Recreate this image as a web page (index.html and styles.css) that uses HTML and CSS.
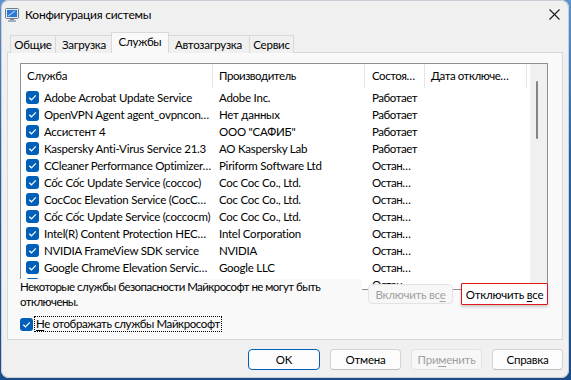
FILE: index.html
```html
<!DOCTYPE html>
<html lang="ru">
<head>
<meta charset="utf-8">
<link rel="stylesheet" href="styles.css">
</head>
<body>
<div class="window">
  <div class="titlebar">
    <svg class="app-icon" width="14" height="14" viewBox="0 0 14 14">
      <rect x="0.5" y="0.5" width="13" height="10" rx="1" fill="#e6ebf1" stroke="#6d7c8d"/>
      <rect x="2" y="2" width="10" height="7" fill="#2b78d4"/>
      <path d="M3 8 L10 3" stroke="#9cc8f5" stroke-width="1.2"/>
      <rect x="5" y="10.5" width="4" height="2" fill="#7f8a96"/>
      <rect x="3" y="12" width="8" height="2" rx="0.5" fill="#a3adb8"/>
    </svg>
    <span class="title">Конфигурация системы</span>
    <svg class="close" width="11" height="11" viewBox="0 0 11 11">
      <path d="M0.5 0.5 L10.5 10.5 M10.5 0.5 L0.5 10.5" stroke="#1a1a1a" stroke-width="1.1"/>
    </svg>
  </div>
  <div class="tabs">
    <div class="tab t1">Общие</div>
    <div class="tab t2">Загрузка</div>
    <div class="tab t3 active">Службы</div>
    <div class="tab t4">Автозагрузка</div>
    <div class="tab t5">Сервис</div>
  </div>
  <div class="panel">
    <div class="listview">
      <div class="lv-content">
        <div class="lv-head">
          <div class="hc c1">Служба</div>
          <div class="hc c2">Производитель</div>
          <div class="hc c3">Состоя…</div>
          <div class="hc c4">Дата отключе…</div>
        </div>
        <div class="lv-row"><div class="cell c1"><span class="cb"></span><span>Adobe Acrobat Update Service</span></div><div class="cell c2">Adobe Inc.</div><div class="cell c3">Работает</div><div class="cell c4"></div></div>
        <div class="lv-row"><div class="cell c1"><span class="cb"></span><span>OpenVPN Agent agent_ovpncon…</span></div><div class="cell c2">Нет данных</div><div class="cell c3">Работает</div><div class="cell c4"></div></div>
        <div class="lv-row"><div class="cell c1"><span class="cb"></span><span>Ассистент 4</span></div><div class="cell c2">ООО "САФИБ"</div><div class="cell c3">Работает</div><div class="cell c4"></div></div>
        <div class="lv-row"><div class="cell c1"><span class="cb"></span><span>Kaspersky Anti-Virus Service 21.3</span></div><div class="cell c2">AO Kaspersky Lab</div><div class="cell c3">Работает</div><div class="cell c4"></div></div>
        <div class="lv-row"><div class="cell c1"><span class="cb"></span><span>CCleaner Performance Optimizer…</span></div><div class="cell c2">Piriform Software Ltd</div><div class="cell c3">Остан…</div><div class="cell c4"></div></div>
        <div class="lv-row"><div class="cell c1"><span class="cb"></span><span>Cốc Cốc Update Service (coccoc)</span></div><div class="cell c2">Coc Coc Co., Ltd.</div><div class="cell c3">Остан…</div><div class="cell c4"></div></div>
        <div class="lv-row"><div class="cell c1"><span class="cb"></span><span>CocCoc Elevation Service (CocC…</span></div><div class="cell c2">Coc Coc Co., Ltd.</div><div class="cell c3">Остан…</div><div class="cell c4"></div></div>
        <div class="lv-row"><div class="cell c1"><span class="cb"></span><span>Cốc Cốc Update Service (coccocm)</span></div><div class="cell c2">Coc Coc Co., Ltd.</div><div class="cell c3">Остан…</div><div class="cell c4"></div></div>
        <div class="lv-row"><div class="cell c1"><span class="cb"></span><span>Intel(R) Content Protection HEC…</span></div><div class="cell c2">Intel Corporation</div><div class="cell c3">Остан…</div><div class="cell c4"></div></div>
        <div class="lv-row"><div class="cell c1"><span class="cb"></span><span>NVIDIA FrameView SDK service</span></div><div class="cell c2">NVIDIA</div><div class="cell c3">Остан…</div><div class="cell c4"></div></div>
        <div class="lv-row"><div class="cell c1"><span class="cb"></span><span>Google Chrome Elevation Servic…</span></div><div class="cell c2">Google LLC</div><div class="cell c3">Остан…</div><div class="cell c4"></div></div>
        <div class="lv-row"><div class="cell c1"><span class="cb"></span><span>Google Chrome Update Service…</span></div><div class="cell c2">Google LLC</div><div class="cell c3">Остан…</div><div class="cell c4"></div></div>
      </div>
      <div class="scrollbar"><div class="thumb"></div></div>
    </div>
    <div class="notice-row">
      <div class="notice">Некоторые службы безопасности Майкрософт не могут быть отключены.</div>
      <div class="btn small disabled"><span>Включить вс<u>е</u></span></div>
      <div class="btn small focused"><span>Отключить <u>в</u>се</span></div>
    </div>
    <div class="hide-row">
      <span class="cb big"></span>
      <span class="hide-label"><u>Н</u>е отображать службы Майкрософт</span>
    </div>
  </div>
  <div class="buttons">
    <div class="btn dlg default"><span>OK</span></div>
    <div class="btn dlg"><span>Отмена</span></div>
    <div class="btn dlg disabled"><span>При<u>м</u>енить</span></div>
    <div class="btn dlg"><span>Справка</span></div>
  </div>
</div>
</body>
</html>
```

FILE: styles.css
```css
html, body {
  margin: 0;
  padding: 0;
}
body {
  width: 571px;
  height: 380px;
  overflow: hidden;
  background: linear-gradient(180deg, #5f93c9 0%, #2a62a8 40%, #1c4b8c 100%);
  font-family: Lato, "Noto Sans", sans-serif;
  font-size: 11.5px;
  letter-spacing: -0.25px;
  color: #000;
}
.window {
  margin-left: 1px;
  width: 568px;
  height: 378px;
  background: #f0f0f0;
  border-radius: 8px;
  display: flex;
  flex-direction: column;
  box-sizing: border-box;
  box-shadow: inset 0 0 0 1px #c9ced6;
}
.titlebar {
  height: 29px;
  display: flex;
  align-items: center;
  padding-left: 4px;
  flex: none;
}
.app-icon {
  margin-right: 6px;
  margin-top: 1px;
}
.title {
  flex: 1;
  font-size: 12px;
  color: #000;
}
.close {
  margin-right: 9px;
}
.tabs {
  height: 24px;
  display: flex;
  align-items: flex-end;
  padding-left: 9px;
  flex: none;
  position: relative;
  z-index: 1;
  margin-bottom: -1px;
}
.tab {
  height: 18px;
  box-sizing: border-box;
  border: 1px solid #d9d9d9;
  border-bottom: none;
  background: #f0f0f0;
  display: flex;
  align-items: center;
  justify-content: center;
  margin-right: -1px;
  padding-bottom: 1px;
}
.tab.active {
  height: 21px;
  background: #f9f9f9;
  margin-left: -1px;
  margin-right: -2px;
  padding-bottom: 3px;
  z-index: 2;
  position: relative;
}
.t1 { width: 46px; }
.t2 { width: 58px; }
.t3 { width: 58px; }
.t4 { width: 83px; }
.t5 { width: 45px; }
.panel {
  margin: 0 6px;
  height: 288px;
  box-sizing: border-box;
  border: 1px solid #d9d9d9;
  background: #f9f9f9;
  padding: 10px 0 0 12px;
  flex: none;
}
.listview {
  width: 528px;
  height: 227px;
  box-sizing: border-box;
  border: 1px solid #8f8f8f;
  background: #fff;
  display: flex;
  overflow: hidden;
}
.lv-content {
  width: 509px;
  overflow: hidden;
}
.lv-head {
  display: flex;
  height: 25px;
}
.hc {
  box-sizing: border-box;
  height: 24px;
  line-height: 24px;
  padding-left: 6px;
  border-right: 1px solid #e5e5e5;
  white-space: nowrap;
  overflow: hidden;
  flex: none;
}
.c1 { width: 192px; }
.c2 { width: 152px; }
.c3 { width: 60px; }
.c4 { width: 102px; }
.hc.c2, .hc.c3, .hc.c4, .cell.c3 { letter-spacing: -0.45px; }
.hc.c3 { padding-left: 7px; }
.lv-row {
  display: flex;
  height: 17px;
  line-height: 17px;
}
.cell {
  box-sizing: border-box;
  white-space: nowrap;
  overflow: hidden;
  padding-left: 6px;
  flex: none;
}
.cell.c1 {
  display: flex;
  align-items: center;
  padding-left: 5px;
}
.cell.c3 { padding-left: 7px; }
.cb {
  display: inline-block;
  width: 13px;
  height: 13px;
  border-radius: 3px;
  background: #005fb8 url("data:image/svg+xml;utf8,<svg xmlns='http://www.w3.org/2000/svg' width='13' height='13' viewBox='0 0 13 13'><path d='M3.3 6.7 L5.5 8.8 L9.8 4.3' fill='none' stroke='white' stroke-width='1.2'/></svg>") no-repeat center;
  margin-right: 5px;
  flex: none;
}
.scrollbar {
  width: 17px;
  background: #f0f0f0;
  flex: none;
  padding-top: 17px;
  box-sizing: border-box;
}
.thumb {
  width: 2px;
  height: 58px;
  margin-left: 6px;
  background: #858585;
  border-radius: 1px;
}
.notice-row {
  display: flex;
  align-items: flex-start;
  margin-top: -11px;
  position: relative;
  height: 30px;
}
.notice {
  width: 342px;
  line-height: 15px;
  background: #f9f9f9;
  height: 30px;
  flex: none;
  letter-spacing: -0.55px;
}
.btn {
  box-sizing: border-box;
  display: flex;
  align-items: center;
  justify-content: center;
  background: #fdfdfd;
  border: 1px solid #d3d3d3;
  border-bottom-color: #bcbcbc;
  border-radius: 4px;
  white-space: nowrap;
  flex: none;
}
.btn u {
  text-underline-offset: 2px;
}
.btn.disabled {
  color: #a0a0a0;
  background: #f7f7f7;
  border-color: #e3e3e3;
}
.notice-row .btn.disabled {
  width: 85px;
  height: 20px;
  margin-left: 6px;
  margin-top: 5px;
}
.btn.focused {
  width: 87px;
  height: 22px;
  margin-left: 8px;
  margin-top: 4px;
  border: 1px solid #e3141b;
  border-radius: 1px;
  background: #fff;
  box-shadow: 0 2px 3px rgba(0,0,0,0.18);
}
.hide-row {
  display: flex;
  align-items: center;
  margin-top: 8px;
  height: 14px;
}
.cb.big {
  margin-right: 2px;
}
.hide-label {
  outline: 1px dotted #000;
  outline-offset: 0;
  line-height: 14px;
  padding: 0 1px;
  letter-spacing: -0.4px;
}
.hide-label u {
  text-underline-offset: 2px;
}
.buttons {
  display: flex;
  justify-content: flex-end;
  gap: 10px;
  margin-top: 9px;
  padding-right: 6px;
}
.btn.dlg {
  width: 71px;
  height: 21px;
}
.btn.default {
  width: 72px;
  border: 1px solid #005fb8;
}
```
